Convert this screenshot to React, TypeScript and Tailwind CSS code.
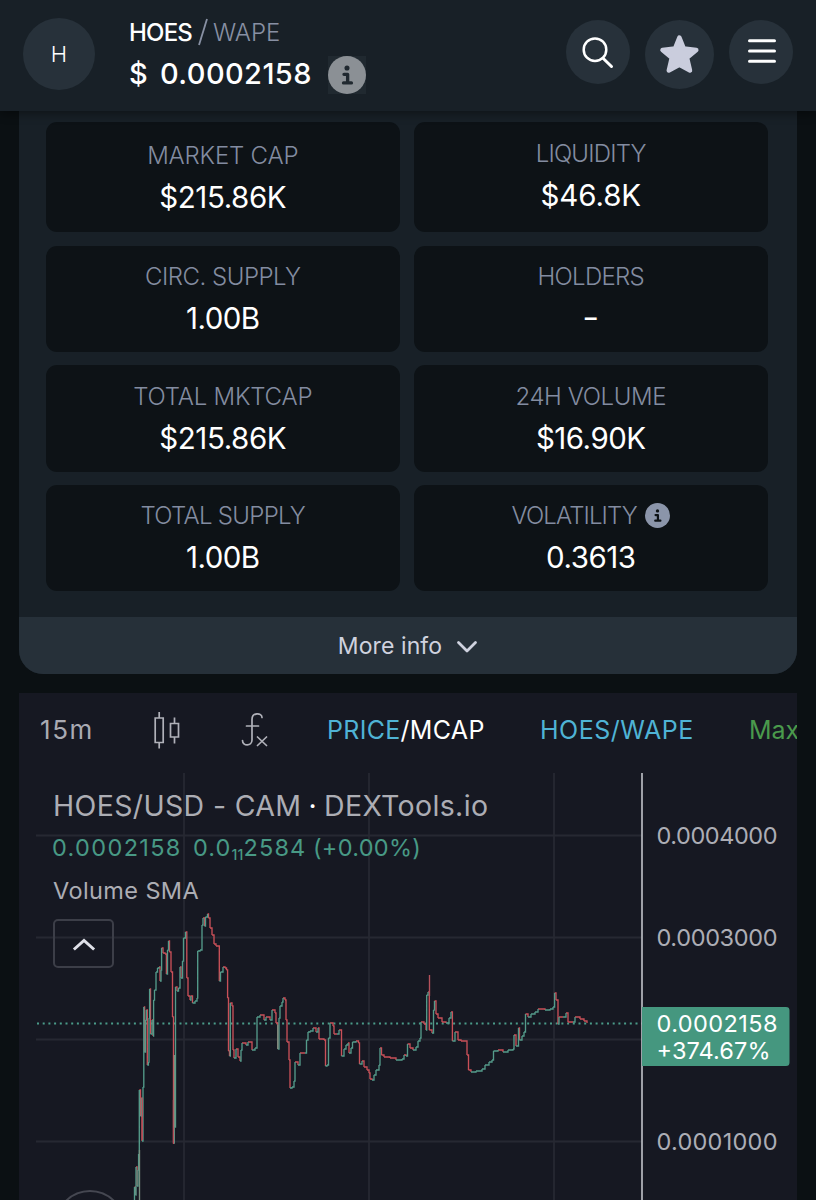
import type { ReactNode } from 'react';

type Point = [number, number];

const PRICE: Point[] = [
  [134, 1200], [134.5, 1187], [135.5, 1195], [136, 1167], [137, 1186], [138, 1170], [138.6, 1154], [139.3, 1090], [140.5, 1116],
  [141.4, 1098], [142, 1141], [143, 1087], [143.8, 1007], [144.6, 1052], [145.5, 1020], [146.3, 1010], [147.3, 1065], [148.4, 1062],
  [149, 1018], [149.6, 989], [150.5, 1034], [152, 1020], [153, 1036], [153.6, 1000], [154.5, 990], [156, 972], [157.5, 968],
  [159, 967], [160, 981], [161, 970], [161.6, 948], [163, 953], [165, 954], [166.4, 974], [167.5, 950], [168.5, 941], [169.5, 952],
  [171, 972], [172.5, 1017], [173.5, 1143], [174.3, 1127], [175.5, 987], [177, 991], [178.5, 988], [180, 967], [181, 978],
  [182.5, 961], [183.5, 938], [185.5, 932], [186.8, 978], [188, 996], [190, 1000], [191, 996], [192.5, 1003], [195, 1001],
  [197, 998], [197.7, 951], [200, 950], [202, 925], [203, 918], [204.5, 926], [205.5, 917], [207.5, 914], [208.5, 918], [210, 928],
  [212, 935], [214, 944], [216, 946], [218, 946], [219.3, 981], [220.5, 972], [223, 967], [225, 968], [226.5, 970], [227.6, 998],
  [228.5, 1051], [229.5, 1056], [230.3, 1003], [232, 1006], [233, 1050], [234, 1058], [236, 1049], [238, 1057], [240, 1061],
  [241, 1050], [242, 1043], [246, 1045], [248, 1042], [252, 1050], [255, 1048], [257, 1017], [260, 1015], [264, 1020],
  [266, 1017], [270, 1020], [272, 1010], [275, 1013], [276, 1023], [277.8, 1049], [279, 1018], [280, 1006], [282, 1002], [283, 998],
  [285, 1000], [286, 1020], [287, 1042], [289, 1060], [290, 1088], [292, 1087], [294, 1081], [295, 1062], [298, 1065], [300, 1053],
  [305, 1053], [306.5, 1040], [308, 1032], [310, 1031], [313, 1028], [316, 1032], [318, 1028], [319, 1039], [324, 1040],
  [325.5, 1066], [327, 1065], [328.5, 1038], [330, 1023], [333, 1026], [334, 1034], [337, 1034], [339, 1030], [341.5, 1056],
  [344, 1049], [346, 1045], [348, 1043], [349, 1053], [351, 1048], [352.5, 1042], [356, 1041], [358.5, 1043], [359.5, 1064],
  [362, 1061], [364, 1067], [367, 1070], [369, 1073], [370, 1079], [372, 1080], [374, 1075], [376, 1070], [379, 1065],
  [380, 1048], [381.5, 1055], [384, 1057], [390, 1058], [396, 1060], [402, 1059], [404, 1055], [406, 1056], [407.5, 1044],
  [410, 1048], [413, 1050], [416, 1047], [418, 1041], [420, 1038], [421, 1022], [424, 1024], [426, 1030], [426.7, 995],
  [428, 992], [429.3, 1030], [432, 1033], [433.5, 1010], [434.5, 1001], [436, 1014], [438, 1018], [442, 1022], [446, 1023],
  [449, 1018], [451, 1012], [452.4, 1041], [455, 1032], [458, 1040], [461, 1041], [466, 1041], [467, 1055], [468.5, 1070],
  [471, 1072], [476, 1071], [482, 1069], [485, 1065], [489, 1062], [492, 1060], [493.5, 1051], [498, 1050], [503, 1052],
  [508, 1050], [513, 1049], [514, 1035], [516, 1046], [518.5, 1028], [519.5, 1040], [522, 1036], [524, 1032], [525.5, 1014],
  [528, 1017], [531, 1014], [535, 1012], [538, 1009], [545, 1010], [550, 1009], [553, 1007], [554.6, 993], [556, 1000],
  [558, 1024], [559, 1017], [563, 1017], [566, 1013], [568, 1022], [573, 1022], [575, 1017], [580, 1019], [584, 1021], [587, 1023],
];

const seg = (up: boolean) =>
  PRICE.slice(1)
    .map(([x, y], i) => {
      const [px, py] = PRICE[i];
      return y < py === up ? `M${px} ${py}H${x}V${y}` : '';
    })
    .join('');

function InfoDot({ className, dark }: { className: string; dark: string }) {
  return (
    <svg className={className} viewBox="0 0 24 24">
      <circle cx="12" cy="12" r="12" fill="currentColor" />
      <circle cx="12" cy="7.6" r="1.6" fill={dark} />
      <path d="M10.1 11.6h2.3v5.1M9.8 17h5" stroke={dark} strokeWidth="2.1" strokeLinecap="round" strokeLinejoin="round" fill="none" />
    </svg>
  );
}

function Stat({ label, value, labelClass, valueClass, className, info }: {
  label: string; value: string; labelClass: string; valueClass: string; className: string; info?: boolean;
}) {
  return (
    <div className={`flex flex-col items-center rounded-[11px] bg-[#0d1216] ${className}`}>
      <div className="flex h-[36px] items-center gap-[8px] text-[24px] font-light text-[#838ca0]">
        <span className={`whitespace-nowrap ${labelClass}`}>{label}</span>
        {info && <InfoDot className="-mt-[1px] size-[25px] text-[#8b95aa]" dark="#0d1216" />}
      </div>
      <div className={`flex h-[46px] items-center whitespace-nowrap text-[29.5px] text-white ${valueClass}`}>{value}</div>
    </div>
  );
}

function RoundButton({ className, children }: { className: string; children: ReactNode }) {
  return <button className={`flex shrink-0 items-center justify-center rounded-full bg-[#27313a] ${className}`}>{children}</button>;
}

export default function App() {
  return (
    <div className="flex h-[1200px] w-[816px] flex-col overflow-hidden bg-[#0b1013] font-['Inter',sans-serif]">
      <header className="z-10 flex h-[111px] shrink-0 bg-[#182027] shadow-[0_2px_10px_rgba(0,0,0,0.45)]">
        <div className="ml-[23px] mt-[18px] flex size-[72px] shrink-0 items-center justify-center rounded-full bg-[#27313a] text-[22px] font-light text-white">H</div>
        <div className="ml-[34px] mt-[14px] w-[300px] whitespace-nowrap">
          <div className="flex h-[36px] items-center pt-[2px] text-[24px]">
            <span className="w-[69px] font-medium tracking-[-0.8px] text-white">HOES</span>
            <svg className="-mt-[2px] h-[28px] w-[10px]" viewBox="0 0 10 28"><path d="M1 27L9 1" stroke="#8890a3" strokeWidth="1.8" /></svg>
            <span className="ml-[5px] font-light text-[#8890a3]">WAPE</span>
          </div>
          <div className="flex h-[47px] items-center text-[29px] font-medium text-white">
            <span className="w-[31px]">$</span>
            <span className="w-[168px] tracking-[0.4px]">0.0002158</span>
            <span className="mt-[3px] flex size-[38px] items-center bg-[#202930]">
              <InfoDot className="size-[38px] text-[#8b9095]" dark="#202930" />
            </span>
          </div>
        </div>
        <div className="ml-[137px] mt-[20px] flex">
          <RoundButton className="size-[64px]">
            <svg className="size-[64px]" viewBox="0 0 64 64" fill="none" stroke="#fff" strokeLinecap="round">
              <circle cx="29" cy="29.700" r="11.3" strokeWidth="2.500" /><path d="M37.3 38.500l8.200 8" strokeWidth="3" />
            </svg>
          </RoundButton>
          <RoundButton className="ml-[15px] size-[69px]">
            <svg className="size-[69px]" viewBox="0 0 69 69">
              <path d="M34.4 17.500l4.400 11 12.500 1.500-9.300 7.800 3 12.700-10.600-5.800-10.600 5.800 3-12.700-9.300-7.800 12.500-1.500z" fill="#cacddd" stroke="#cacddd" strokeWidth="4.500" strokeLinejoin="round" />
            </svg>
          </RoundButton>
          <RoundButton className="ml-[15px] size-[64px]">
            <svg className="size-[64px]" viewBox="0 0 64 64" fill="none" stroke="#fff" strokeWidth="3" strokeLinecap="round">
              <path d="M20.500 20.8h25M20.500 31h25M20.500 41.2h25" />
            </svg>
          </RoundButton>
        </div>
      </header>

      <section className="mx-[19px] flex h-[563px] shrink-0 flex-col overflow-hidden rounded-b-[24px] bg-[#182027]">
        <div className="grid h-[506px] shrink-0 grid-cols-[354.500px_354.500px] content-start gap-x-[13.500px] gap-y-[14px] pl-[26.500px] pt-[11px]">
          <Stat className="h-[110px] pt-[16px]" label="MARKET CAP" value="$215.86K" labelClass="tracking-[-0.2px]" valueClass="tracking-[-0.4px]" />
          <Stat className="h-[110px] pt-[14px]" label="LIQUIDITY" value="$46.8K" labelClass="tracking-[-0.800px]" valueClass="tracking-[-0.1px]" />
          <Stat className="h-[106px] pt-[13px]" label="CIRC. SUPPLY" value="1.00B" labelClass="tracking-[-0.5px]" valueClass="tracking-[-0.600px]" />
          <Stat className="h-[106px] pt-[13px]" label="HOLDERS" value="-" labelClass="tracking-[-0.7px]" valueClass="scale-x-125 pb-[2px]" />
          <Stat className="-mt-[1px] h-[107px] pt-[14px]" label="TOTAL MKTCAP" value="$215.86K" labelClass="tracking-[-0.2px]" valueClass="tracking-[-0.4px]" />
          <Stat className="-mt-[1px] h-[107px] pt-[14px]" label="24H VOLUME" value="$16.90K" labelClass="tracking-[-0.4px]" valueClass="tracking-[-0.5px]" />
          <Stat className="-mt-[1px] h-[106px] pt-[13px]" label="TOTAL SUPPLY" value="1.00B" labelClass="tracking-[-0.700px]" valueClass="tracking-[-0.600px]" />
          <Stat className="-mt-[1px] h-[106px] pt-[13px]" label="VOLATILITY" value="0.3613" labelClass="tracking-[-0.900px]" valueClass="tracking-[-0.5px]" info />
        </div>
        <button className="flex h-[57px] items-center justify-center gap-[14px] bg-[#263039] text-[23px] text-[#cfd2df]">
          <span className="mt-[1px] tracking-[0.100px]">More info</span>
          <svg className="mt-[3px] h-[14px] w-[22px]" viewBox="0 0 22 14" fill="none" stroke="#cfd2df" strokeWidth="2.8" strokeLinecap="round" strokeLinejoin="round"><path d="M2.5 2.5L11 11l8.500-8.500" /></svg>
        </button>
      </section>

      <section className="relative mx-[19px] mt-[19px] flex h-[507px] shrink-0 flex-col overflow-hidden bg-[#161822]">
        <div className="flex h-[77px] shrink-0 items-center whitespace-nowrap pl-[21px] pb-[2px] text-[25px]">
          <span className="-mt-[2px] w-[107px] shrink-0 text-[26px] tracking-[1.600px] text-[#a9aab2]">15m</span>
          <svg className="mt-[-2px] h-[40px] w-[34px] shrink-0" viewBox="146 709 34 40" fill="none" stroke="#b0b1b9" strokeWidth="1.7">
            <path d="M154.200 717h8v24.500h-8zM158.200 711v6M158.200 741.500v6M169.500 722.500h8v13.500h-8zM173.500 716.500v6M173.500 736v6.500" />
          </svg>
          <svg className="-mt-[2px] ml-[60px] h-[40px] w-[28px] shrink-0" viewBox="240 709 28 40" fill="none" stroke="#b0b1b9" strokeWidth="1.700" strokeLinecap="round">
            <path d="M261 716.500c0-5-10-5.500-10 2V739c0 6.500-9.500 6.500-9.500.5M245.500 725h12M256.500 736l9 8.500M265.500 736l-9 8.500" />
          </svg>
          <span className="ml-[58px] w-[213px] shrink-0 tracking-[0.3px] text-white"><span className="text-[#4fb3d5]">PRICE</span>/MCAP</span>
          <span className="w-[209px] shrink-0 tracking-[0.500px] text-[#4fb3d5]">HOES/WAPE</span>
          <span className="shrink-0 text-[#4a9a4c]">Max</span>
        </div>
        <svg className="h-[430px] w-[778px] shrink-0" viewBox="19 770 778 430">
          <path d="M36 835.500H642M36 937.500H642M36 1039.500H642M36 1141.500H642M184 773V1200M369 773V1200M554 773V1200" stroke="#262832" strokeWidth="1.800" />
          <path d="M37 1023.500H642" stroke="#4a9b89" strokeWidth="2" strokeDasharray="2 3.700" />
          <g fill="none" strokeWidth="1.350">
            <path d={seg(false)} stroke="#c95058" />
            <path d={seg(true)} stroke="#549b8a" />
            <path d="M429.500 975V996M173.500 1100V1144M142.300 1098V1140" stroke="#b6515b" />
            <path d="M139.500 1150V1200M174.500 1055V1127M277.800 1025V1049" stroke="#789080" />
          </g>
          <path d="M642 773V1200" stroke="#b8bac0" strokeWidth="1.700" />
          <path d="M642 1007H786a3.500 3.500 0 0 1 3.500 3.500V1062.500a3.500 3.500 0 0 1-3.500 3.500H642Z" fill="#45977f" />
          <g fontFamily="Inter, sans-serif" fontSize="23.500" fill="#acadb5">
            <text x="656.500" y="844" textLength="121">0.0004000</text>
            <text x="656.500" y="946" textLength="121">0.0003000</text>
            <text x="656.500" y="1150" textLength="121">0.0001000</text>
            <text x="656.500" y="1032" textLength="121" fill="#fff">0.0002158</text>
            <text x="656.500" y="1059" textLength="114" fill="#fff">+374.67%</text>
          </g>
          <circle cx="90" cy="1225" r="34" fill="#161822" stroke="#454751" strokeWidth="2" />
        </svg>
        <div className="absolute left-[33px] top-[93px] flex flex-col items-start whitespace-nowrap text-[#acadb4]">
          <div className="ml-[1px] flex h-[40px] items-center text-[28.500px] tracking-[0.350px]">HOES/USD - CAM <span className="mx-[7px] text-white">·</span> DEXTools.io</div>
          <div className="mt-[2px] flex h-[40px] items-center text-[23.500px] tracking-[1.350px] text-[#489985]">
            <span className="w-[141px]">0.0002158</span>
            <span className="w-[120px] tracking-[1.100px]">0.0<sub className="bottom-[-4px] text-[14px] font-medium tracking-[0.200px]">11</sub>2584</span>
            <span className="tracking-[0.300px]">(+0.00%)</span>
          </div>
          <div className="ml-[1px] mt-[5px] flex h-[36px] items-center text-[23.500px] tracking-[0.400px]">Volume SMA</div>
          <button className="ml-[1px] mt-[10px] flex h-[49px] w-[61px] items-center justify-center rounded-[5px] border-2 border-[#3c3e48]">
            <svg className="h-[14px] w-[24px]" viewBox="0 0 24 14" fill="none" stroke="#dfe0e8" strokeWidth="3" strokeLinecap="square"><path d="M3 11.500L12 3.500l9 8" /></svg>
          </button>
        </div>
      </section>
    </div>
  );
}
